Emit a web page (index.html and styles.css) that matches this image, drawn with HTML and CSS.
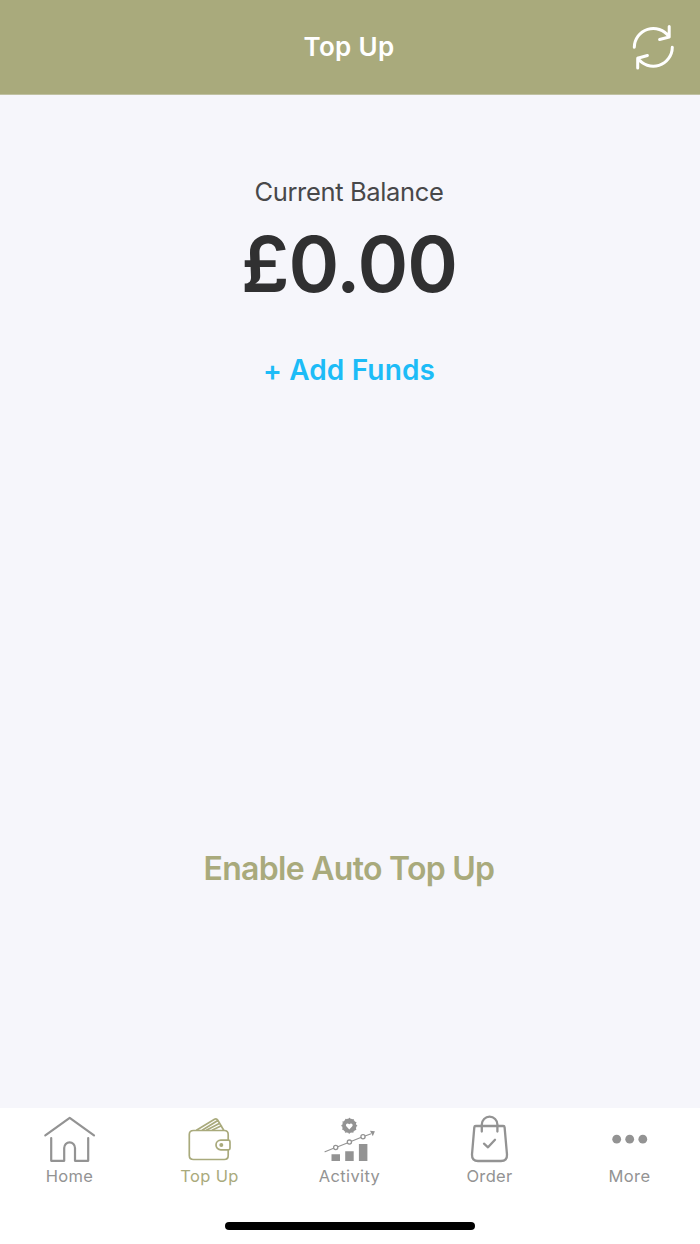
FILE: index.html
```html
<!DOCTYPE html>
<html lang="en">
<head>
<meta charset="utf-8">
<title>Top Up</title>
<link rel="stylesheet" href="styles.css">
</head>
<body>
<div class="app">
  <header class="header">
    <h1 class="title">Top Up</h1>
    <button class="refresh" aria-label="Refresh">
      <svg viewBox="10 12 48 48" width="48" height="48">
        <path d="M14.3 36.3A19 19 0 0 1 48.8 25.5M49.2 15.5V26L39.6 28.5M52.3 36.3A19 19 0 0 1 17.8 47.2M17.7 57V47.2L27.4 44.5"/>
      </svg>
    </button>
  </header>
  <main class="main">
    <p class="label">Current Balance</p>
    <p class="balance">£0.00</p>
    <a class="add"><span class="plus">+</span> Add Funds</a>
    <a class="auto">Enable Auto Top Up</a>
  </main>
  <nav class="tabs">
    <a class="tab">
      <svg class="icon" viewBox="0 8 80 62">
        <path d="M15.3 35.3L39.7 17.8L64 35.3" stroke-width="2.2"/>
        <path d="M21.2 38V60.8H34.2V48A5.4 5.6 0 0 1 45 48V60.8H58.2V38" stroke-width="2.2"/>
      </svg>
      <span class="name">Home</span>
    </a>
    <a class="tab active">
      <svg class="icon" viewBox="0 8 80 62" stroke-width="1.7">
        <path d="M58.2 39.5V34.5Q58.2 30.5 54.2 30.5H23.5Q19.3 30.5 19.3 34.5V55.5Q19.3 59.5 23.5 59.5H54.2Q58.2 59.5 58.2 55.5V50"/>
        <path d="M58.4 40.2H50.8A4.8 4.8 0 0 0 50.8 49.8H58.4Q60 49.8 60 48.2V41.8Q60 40.2 58.4 40.2Z"/>
        <circle cx="51.3" cy="45" r="2" class="fill"/>
        <path d="M26.8 30L44.5 19.3Q46.5 18.2 47.8 20.3L53.6 30M32.5 30L47.8 20.5M36.8 30L49.7 23.3M42.5 30L51.4 25.8"/>
      </svg>
      <span class="name">Top Up</span>
    </a>
    <a class="tab">
      <svg class="icon" viewBox="0 8 80 62">
        <circle cx="39.3" cy="25.8" r="7.2" class="fill"/>
        <circle cx="39.3" cy="25.8" r="7.2" stroke-width="1.6" stroke-dasharray="0 3.77"/>
        <path class="heart" d="M39.3 29.5L36.3 26.3C34.9 24.5 37.4 22.2 39.3 24.3C41.2 22.2 43.7 24.5 42.3 26.3Z"/>
        <path d="M15 51.8L23.6 48.3M27.8 46.7L37.3 42.9M41.5 41.3L50.8 37.5M55 36L60.5 33.9" stroke-width="1.1"/>
        <g stroke-width="1.3"><circle cx="25.7" cy="47.5" r="2.1"/><circle cx="39.4" cy="42.1" r="2.1"/><circle cx="53" cy="36.8" r="2.1"/></g>
        <path class="fill" d="M60 30.8L64.9 31.2L62.8 36.2Z"/>
        <path class="fill" d="M21.5 54.3H30V61H21.5ZM35.2 51.2H43.7V61H35.2ZM48.9 43.9H57.4V61H48.9Z"/>
      </svg>
      <span class="name">Activity</span>
    </a>
    <a class="tab">
      <svg class="icon" viewBox="0 8 80 62" stroke-width="2.3">
        <path d="M25.8 26H53.2Q54.5 26 54.6 27.4L57 54.5Q57.3 61 51 61H28Q21.8 61 22 54.5L24.3 27.4Q24.4 26 25.8 26Z"/>
        <path d="M31.8 31.5V24.5A7.8 7.8 0 0 1 47.4 24.5V31.5M34 43.7L38 47.3L45 39.8"/>
      </svg>
      <span class="name">Order</span>
    </a>
    <a class="tab">
      <svg class="icon" viewBox="0 8 80 62">
        <g class="fill"><circle cx="26.7" cy="39.2" r="4.4"/><circle cx="39.7" cy="39.2" r="4.4"/><circle cx="52.8" cy="39.2" r="4.4"/></g>
      </svg>
      <span class="name">More</span>
    </a>
  </nav>
  <div class="home-bar"></div>
</div>
</body>
</html>
```
FILE: styles.css
```css
* { box-sizing: border-box; }
body { margin: 0; font-family: Inter, "Liberation Sans", sans-serif; background: #fff; }
h1, p { margin: 0; }
.app { width: 700px; height: 1244px; display: flex; flex-direction: column; overflow: hidden; }
.header {
  height: 95px; flex: none; background: #a9aa7c; border-bottom: 1px solid #c0c1a2;
  display: grid; grid-template-columns: 80px 1fr 80px; align-items: center;
}
.title { grid-column: 2; text-align: center; color: #fff; font-size: 26px; line-height: 32px; font-weight: 600; letter-spacing: 0.3px; padding-right: 2px; }
.refresh { border: 0; background: none; padding: 0; margin-left: 10px; width: 48px; height: 48px; }
.refresh svg { display: block; fill: none; stroke: #fff; stroke-width: 3; stroke-linecap: round; stroke-linejoin: round; }
.main {
  height: 1013px; flex: none; background: #f6f6fb; padding: 77px 2px 0 0;
  display: flex; flex-direction: column; align-items: center;
}
.label { font-size: 25.5px; line-height: 40px; color: #48484a; letter-spacing: -0.35px; }
.balance { font-size: 77px; line-height: 90px; font-weight: 600; color: #303031; margin-top: 7px; letter-spacing: -1px; }
.add { font-size: 28px; line-height: 40px; font-weight: 600; color: #1dbcf7; margin-top: 41px; letter-spacing: 0.15px; }
.plus { display: inline-block; transform: translateY(1px); }
.auto { font-size: 32px; line-height: 44px; font-weight: 600; color: #a9aa7c; margin-top: 457px; letter-spacing: -0.72px; }
.tabs { height: 80px; flex: none; display: flex; }
.tab { width: 140px; padding-right: 1px; display: flex; flex-direction: column; align-items: center; color: #939393; }
.tab.active { color: #a9aa7c; }
.icon { width: 80px; height: 62px; flex: none; display: block; fill: none; stroke: currentColor; stroke-linecap: round; stroke-linejoin: round; }
.fill { fill: currentColor; stroke: none; }
.heart { fill: #fff; stroke: none; }
.name { font-size: 16.5px; line-height: 20px; margin-top: -4px; letter-spacing: 0.35px; font-weight: 400; }
.home-bar { width: 250px; height: 8px; border-radius: 4px; background: #000; margin: 34px auto 0; }
```
